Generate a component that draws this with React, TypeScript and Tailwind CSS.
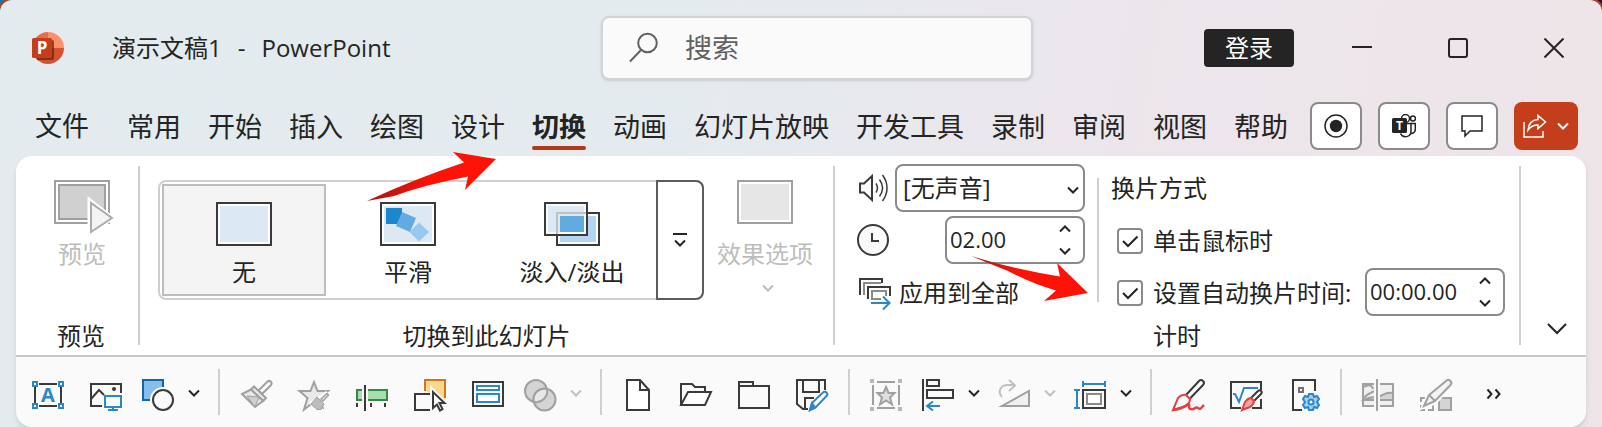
import type { ReactNode } from "react";
import clsx from "clsx";

const DARK = "#3b3a39";
const BLUE = "#2b88c8";
const GRAY = "#a0a0a0";

const tabs = [
  "常用",
  "开始",
  "插入",
  "绘图",
  "设计",
  "切换",
  "动画",
  "幻灯片放映",
  "开发工具",
  "录制",
  "审阅",
  "视图",
  "帮助",
];

function Icon({ children }: { children: ReactNode }) {
  return (
    <svg
      className="h-8 w-8 shrink-0 overflow-visible"
      viewBox="0 0 32 32"
      fill="none"
      stroke={DARK}
      strokeWidth={2}
    >
      {children}
    </svg>
  );
}

function Chevron({ className, up }: { className?: string; up?: boolean }) {
  return (
    <svg
      className={clsx("h-2 w-3 shrink-0", className)}
      viewBox="0 0 12 8"
      fill="none"
      stroke="currentColor"
      strokeWidth={2}
    >
      <path d={up ? "M1 6.5 6 1.5l5 5" : "M1 1.5l5 5 5-5"} />
    </svg>
  );
}

function Tool({ label, children }: { label: string; children: ReactNode }) {
  return (
    <button aria-label={label} className="px-2.5 pt-1.5">
      <Icon>{children}</Icon>
    </button>
  );
}

function SplitTool({
  label,
  disabled,
  children,
}: {
  label: string;
  disabled?: boolean;
  children: ReactNode;
}) {
  return (
    <button
      aria-label={label}
      disabled={disabled}
      className="flex items-center gap-3.5 pt-1.5 pr-2 pl-1"
    >
      <Icon>{children}</Icon>
      <Chevron className={disabled ? "mb-1 text-[#c0c0c0]" : "mb-1"} />
    </button>
  );
}

function ToolDivider() {
  return <div className="mx-1 h-[46px] w-0.5 bg-[#cfcfcf]" />;
}

function Logo() {
  return (
    <svg className="h-8 w-8" viewBox="0 0 32 32">
      <path d="M16 0A16 16 0 0 0 0 16h16z" fill="#ed6c47" />
      <path d="M16 0a16 16 0 0 1 16 16H16z" fill="#ff8f6b" />
      <path d="M0 16a16 16 0 0 0 32 0z" fill="#d35230" />
      <path d="M3 8h17a2 2 0 0 1 2 2v16a2 2 0 0 1-2 2H5z" fill="#6b2412" opacity=".75" />
      <rect y="6" width="20" height="20" rx="1.5" fill="#c43e1c" />
      <text
        x="10"
        y="22"
        textAnchor="middle"
        fontSize="17"
        fontWeight="700"
        fontFamily="Open Sans"
        fill="#fff"
      >
        P
      </text>
    </svg>
  );
}

function TitleBar() {
  return (
    <header className="flex h-24 items-center pl-8">
      <div className="flex flex-1 items-center">
        <Logo />
        <h1 className="ml-12 flex gap-4 text-2xl whitespace-nowrap">
          <span>演示文稿1</span>
          <span>-</span>
          <span>PowerPoint</span>
        </h1>
      </div>

      <label className="flex h-16 w-[432px] items-center rounded-lg border-2 border-[#d4d4d4] bg-[#fafafa] pl-[26px] shadow-sm">
        <svg
          className="h-8 w-8 shrink-0"
          viewBox="0 0 32 32"
          fill="none"
          stroke="#616161"
          strokeWidth={2}
        >
          <circle cx="18.5" cy="11" r="9.3" />
          <path d="M12 18 1 29.5" />
        </svg>
        <input
          type="text"
          aria-label="搜索"
          placeholder="搜索"
          className="ml-6 w-full min-w-0 bg-transparent text-[27px] outline-none placeholder:text-[#616161]"
        />
      </label>

      <div className="flex h-full flex-1 items-center justify-end">
        <button className="mr-5 flex h-[38px] w-[90px] items-center justify-center rounded-sm bg-[#242424] text-2xl text-white">
          登录
        </button>
        <button aria-label="最小化" className="flex h-full w-24 items-center justify-center">
          <svg className="h-5 w-5" viewBox="0 0 20 20" stroke="#242424" strokeWidth={2}>
            <path d="M0 9h20" />
          </svg>
        </button>
        <button aria-label="最大化" className="flex h-full w-24 items-center justify-center">
          <svg className="h-5 w-5" viewBox="0 0 20 20" fill="none" stroke="#242424" strokeWidth={2}>
            <rect x="1" y="1" width="18" height="18" rx="2" />
          </svg>
        </button>
        <button aria-label="关闭" className="flex h-full w-24 items-center justify-center">
          <svg className="h-5 w-5" viewBox="0 0 20 20" stroke="#242424" strokeWidth={2}>
            <path d="M0.5 0.5l19 19M19.5 0.5l-19 19" />
          </svg>
        </button>
      </div>
    </header>
  );
}

function TabBar() {
  return (
    <nav className="flex h-[60px] items-center py-1.5 pr-6 pl-[35px]">
      <a href="#file" className="mr-[38px] text-[27px] leading-[50px]">
        文件
      </a>
      <ul className="flex flex-1 gap-[27px]">
        {tabs.map((tab) => (
          <li key={tab}>
            <a
              href={`#${tab}`}
              className={clsx(
                "flex h-12 flex-col text-[27px] leading-[50px] whitespace-nowrap",
                tab === "切换" && "font-bold"
              )}
            >
              <span className="h-11">{tab}</span>
              {tab === "切换" ? (
                <span className="h-1 rounded-full bg-[#b23a1b]" />
              ) : null}
            </a>
          </li>
        ))}
      </ul>
      <div className="flex gap-4">
        <button
          aria-label="录制"
          className="flex h-12 w-[52px] items-center justify-center rounded-lg border-2 border-[#8a8a8a] bg-white"
        >
          <svg className="h-6 w-6" viewBox="0 0 24 24" fill="none" stroke="#242424">
            <circle cx="12" cy="12" r="11" strokeWidth={1.5} />
            <circle cx="12" cy="12" r="6.2" fill="#242424" stroke="none" />
          </svg>
        </button>
        <button
          aria-label="在 Teams 中演示"
          className="flex h-12 w-[52px] items-center justify-center rounded-lg border-2 border-[#8a8a8a] bg-white"
        >
          <svg className="h-6 w-6" viewBox="0 0 24 24" fill="none" stroke="#242424" strokeWidth={1.5}>
            <circle cx="13.5" cy="4.5" r="4" />
            <circle cx="21" cy="4.5" r="2.5" />
            <path d="M15 9.5h4v8a5.500 5.500 0 0 1-10.500 2" />
            <path d="M19 9.500h4.300v6a4 4 0 0 1-4.500 4" />
            <rect y="4" width="15" height="15" rx="1.5" fill="#242424" stroke="none" />
            <text
              x="7.5"
              y="16"
              textAnchor="middle"
              fontSize="12"
              fontWeight="700"
              fontFamily="Open Sans"
              fill="#fff"
              stroke="none"
            >
              T
            </text>
          </svg>
        </button>
        <button
          aria-label="批注"
          className="flex h-12 w-[52px] items-center justify-center rounded-lg border-2 border-[#8a8a8a] bg-white"
        >
          <svg className="h-6 w-6" viewBox="0 0 24 24" fill="none" stroke="#242424" strokeWidth={1.5}>
            <path d="M2 2h20v15H10l-5 5v-5H2z" />
          </svg>
        </button>
        <button
          aria-label="共享"
          className="flex h-12 w-16 items-center justify-center gap-2.5 rounded-lg bg-[#c43e1c] text-white"
        >
          <svg className="h-6 w-6" viewBox="0 0 24 24" fill="none" stroke="currentColor" strokeWidth={1.5}>
            <path d="M1 8v15h19v-6" />
            <path d="M15 1.5 22.5 8 15 14.500v-3.500c-5 0-7.500 1.500-10 5 .5-6 3.500-10 10-10.500z" />
          </svg>
          <Chevron />
        </button>
      </div>
    </nav>
  );
}

function Group({
  label,
  className,
  children,
}: {
  label: string;
  className?: string;
  children: ReactNode;
}) {
  return (
    <section
      aria-label={label}
      className={clsx("flex flex-col justify-between pt-2", className)}
    >
      {children}
      <p className="pb-[5px] text-center text-2xl leading-7">{label}</p>
    </section>
  );
}

function RibbonDivider() {
  return <div className="my-2.5 w-0.5 bg-[#cfcfcf]" />;
}

function GalleryItem({
  label,
  selected,
  children,
}: {
  label: string;
  selected?: boolean;
  children: ReactNode;
}) {
  return (
    <button
      className={clsx(
        "flex w-[164px] flex-col items-center gap-2.5 border-2 pt-4",
        selected ? "border-[#bdbdbd] bg-[#f4f4f4]" : "border-transparent"
      )}
    >
      <svg className="h-11 w-14" viewBox="0 0 56 44" fill="none" stroke={DARK} strokeWidth={2}>
        {children}
      </svg>
      <span className="text-2xl leading-8">{label}</span>
    </button>
  );
}

function Spinner({ label, value }: { label: string; value: string }) {
  return (
    <div className="flex h-12 w-[140px] items-center rounded-lg border-2 border-[#8a8a8a] bg-white pr-3 pl-[3px]">
      <input
        type="text"
        aria-label={label}
        defaultValue={value}
        className="w-full min-w-0 bg-transparent text-[22px] outline-none"
      />
      <div className="flex flex-col gap-3.5">
        <button aria-label={`${label} +`} className="block">
          <Chevron up />
        </button>
        <button aria-label={`${label} -`} className="block">
          <Chevron />
        </button>
      </div>
    </div>
  );
}

function Check({ label }: { label: string }) {
  return (
    <label className="flex h-12 items-center pt-0.5 text-2xl whitespace-nowrap">
      <span className="mr-2.5 ml-1.5 grid">
        <input
          type="checkbox"
          defaultChecked
          className="peer col-start-1 row-start-1 h-[26px] w-[26px] appearance-none rounded-sm border-2 border-[#8a8a8a] bg-white"
        />
        <svg
          className="pointer-events-none invisible col-start-1 row-start-1 h-[26px] w-[26px] peer-checked:visible"
          viewBox="0 0 26 26"
          fill="none"
          stroke="#242424"
          strokeWidth={2}
        >
          <path d="M6 13l5 5 9.500-9.500" />
        </svg>
      </span>
      {label}
    </label>
  );
}

function Ribbon() {
  return (
    <div className="flex h-[199px] bg-white">
      <Group label="预览" className="w-[122px] pl-2">
        <button disabled className="mt-4 ml-0.5 flex flex-col items-center gap-3 text-[#bdbdbd]">
          <svg className="h-11 w-14 overflow-visible" viewBox="0 0 56 44" stroke="#a0a0a0" strokeWidth={2}>
            <rect x="1" y="1" width="54" height="42" fill="#fff" />
            <rect x="5" y="5" width="46" height="34" fill="#d0d0d0" />
            <path
              d="M35 19v37l24-18z"
              fill="#fff"
              stroke="#fff"
              strokeWidth={3}
            />
            <path d="M37 23v29l21-14z" fill="#f4f4f4" stroke="#ababab" />
          </svg>
          <span className="text-2xl leading-9">预览</span>
        </button>
      </Group>
      <RibbonDivider />

      <Group label="切换到此幻灯片" className="flex-1">
        <div className="mt-4 flex justify-between pr-5 pl-[18px]">
          <div className="flex h-[120px] rounded-lg border-2 border-[#cfcfcf]">
            <div className="flex p-0.5">
              <GalleryItem label="无" selected>
                <rect x="1" y="1" width="54" height="42" fill="#fff" />
                <path d="M4 4h48v36H4z" fill="#dce9f5" stroke="none" />
              </GalleryItem>
              <GalleryItem label="平滑">
                <rect x="1" y="1" width="54" height="42" fill="#fff" />
                <g stroke="none">
                  <path d="M4 4h48v36H4z" fill="#dce9f5" />
                  <path d="M6 6h16v16H6z" fill="#1c87cd" />
                  <path d="M22 10l14 6-6 14-14-6z" fill="#62abe0" />
                  <path d="M39 20.500l10 9.500-10 9.500-9.500-9.500z" fill="#99c8ee" />
                </g>
              </GalleryItem>
              <GalleryItem label="淡入/淡出">
                <rect x="13" y="11" width="42" height="32" fill="#fff" />
                <path d="M16 14h36v26H16z" fill="#b3d5f2" stroke="none" />
                <rect x="1" y="1" width="42" height="32" fill="#f7fafd" />
                <path d="M4 4h36v26H4z" fill="#dce9f5" stroke="none" />
                <path d="M13 32V11h29" stroke="#c0c0c0" />
                <path d="M16 14h24v16H16z" fill="#62abe0" stroke="none" />
              </GalleryItem>
            </div>
            <button
              aria-label="其他切换效果"
              className="-my-0.5 -mr-0.5 flex w-12 flex-col items-center justify-center gap-1 rounded-r-lg border-2 border-[#5c5c5c]"
            >
              <span className="h-0.5 w-3.5 bg-[#242424]" />
              <Chevron />
            </button>
          </div>
          <button disabled className="flex flex-col items-center gap-3 text-2xl text-[#bdbdbd]">
            <svg className="h-11 w-14" viewBox="0 0 56 44" stroke="#a0a0a0" strokeWidth={2}>
              <rect x="1" y="1" width="54" height="42" fill="#fff" />
              <path d="M4 4h48v36H4z" fill="#e6e6e6" stroke="none" />
            </svg>
            <span className="leading-9">效果选项</span>
            <Chevron className="ml-1.5" />
          </button>
        </div>
      </Group>
      <RibbonDivider />

      <Group label="计时" className="w-[684px]">
        <div className="flex pl-[22px] text-2xl">
          <div className="flex w-[228px] flex-col gap-1">
            <div className="flex h-12 items-center justify-between">
              <Icon>
                <path d="M3 11.500h4L15 4v24l-8-7.500H3z" fill="#fafafa" />
                <g strokeWidth={1.5}>
                  <path d="M19 11.500c2 3 2 6 0 9" />
                  <path d="M22.500 7.500c4 5.500 4 11.500 0 17" />
                  <path d="M25.500 3c6 8 6 18 0 26" />
                </g>
              </Icon>
              <div className="grid w-[190px]">
                <select
                  aria-label="声音"
                  className="col-start-1 row-start-1 h-12 w-full appearance-none rounded-lg border-2 border-[#8a8a8a] bg-white pl-1.5"
                >
                  <option>[无声音]</option>
                </select>
                <Chevron className="pointer-events-none col-start-1 row-start-1 mt-1 mr-1.5 self-center justify-self-end" />
              </div>
            </div>
            <div className="flex h-12 items-center justify-between">
              <Icon>
                <circle cx="16" cy="16" r="15" fill="#fafafa" />
                <path d="M15 9v8h7" />
              </Icon>
              <Spinner label="持续时间" value="02.00" />
            </div>
            <button className="flex h-12 items-center gap-2.5 pt-0.5">
              <Icon>
                <path d="M3 18V2h22v4" />
                <path d="M7 18V6h17" stroke="#8a8a8a" />
                <path d="M11 22V10h22v9" />
                <path d="M15 23v-9h14v5M15 22h9" stroke="#8a8a8a" />
                <path d="M14 26h18M26 19.500l6.500 6.500-6.500 6.500" stroke={BLUE} />
              </Icon>
              应用到全部
            </button>
          </div>
          <div className="mx-3 mt-3.5 h-[124px] w-0.5 bg-[#cfcfcf]" />
          <div className="flex flex-1 flex-col gap-1">
            <p className="h-12 leading-[48px]">换片方式</p>
            <Check label="单击鼠标时" />
            <div className="flex items-center justify-between pr-3.5">
              <Check label="设置自动换片时间:" />
              <Spinner label="自动换片时间" value="00:00.00" />
            </div>
          </div>
        </div>
      </Group>
      <RibbonDivider />

      <div className="flex w-[65px] items-end pb-5 pl-[26px]">
        <button aria-label="折叠功能区">
          <svg className="h-3 w-5" viewBox="0 0 20 12" fill="none" stroke="#242424" strokeWidth={2}>
            <path d="M1 1l9 9 9-9" />
          </svg>
        </button>
      </div>
    </div>
  );
}

function QuickAccess() {
  return (
    <div className="flex h-[72px] items-center gap-1.5 border-t-2 border-[#c8c8c8] bg-[#fafafa] pl-1.5 text-[#242424]">
      <Tool label="文本框">
        <path d="M7 5h18M7 27h18M3 8v16M29 8v16" />
        <g stroke={BLUE} fill="#fff">
          <path d="M1 3h4v4H1zM27 3h4v4h-4zM1 25h4v4H1zM27 25h4v4h-4z" />
        </g>
        <text
          x="16"
          y="23"
          textAnchor="middle"
          fontSize="20"
          fontWeight="700"
          fontFamily="Open Sans"
          fill={BLUE}
          stroke="none"
        >
          A
        </text>
      </Tool>
      <Tool label="插入图片">
        <path d="M12 27H1V5h30v9" />
        <path d="M1 20l8-9 5 5" />
        <circle cx="24" cy="10" r="2" fill={DARK} stroke="none" />
        <path d="M15 17h16v11H15zM23 28v4M18 31h10" stroke={BLUE} />
      </Tool>
      <SplitTool label="形状">
        <path d="M1 1h20v20H1z" fill="#83beec" stroke="#1565a8" />
        <circle cx="21" cy="21" r="13" fill="#fafafa" stroke="none" />
        <circle cx="21" cy="21" r="10" />
      </SplitTool>
      <ToolDivider />

      <Tool label="格式刷">
        <g stroke={GRAY} fill="#e8e8e8">
          <path d="M18.500 11.500 27.500 2.500a2.500 2.500 0 0 1 3.500 3.500L22 15z" fill="#fafafa" />
          <path d="M14 7.500 26 19l-3 3L11 10.500z" />
          <path d="M11 10.500 2 15l13 13 8-6z" />
          <path d="M7 17l12 1-4 10z" fill="#d0d0d0" strokeWidth={1} />
        </g>
      </Tool>
      <Tool label="动画刷">
        <g stroke={GRAY} fill="#e8e8e8">
          <path d="M16 3l3.500 9H30l-8.500 7 3 9.500L16 23l-10 7.500L9.500 19 1.500 12h11z" />
          <path
            d="M11 23l7-4 10-7 4 4-7 6-4 10h-5z"
            fill="#fafafa"
            stroke="none"
          />
          <path d="M23 20l6-5.500 1.500 1.500-5.500 6z" strokeWidth={1.5} />
          <path d="M19 18l7 7-3 5.500h-4L13 25z" fill="#bdbdbd" strokeWidth={1} />
        </g>
      </Tool>
      <Tool label="动画窗格">
        <path d="M1 11h30v10H1z" fill="#a5dfab" stroke="#38884a" />
        <path d="M9 7v24" stroke="#fafafa" strokeWidth={6} />
        <path d="M9 6v26M1 24v4M15 24v4M29 24v4" />
      </Tool>
      <Tool label="选择窗格">
        <path d="M11 12V1h20v20" fill="#f9d88d" stroke="none" />
        <path d="M11 12V1h20v18" stroke="#d3761b" />
        <path d="M16 6v26h16V22z" fill="#fafafa" stroke="none" />
        <path d="M16 15H1v16h15" />
        <path d="M19 13v16l4-3.500 3 6 2.500-1.500-3-6h5z" fill="#fff" />
      </Tool>
      <Tool label="幻灯片版式">
        <path d="M1 3h30v24H1z" />
        <path d="M5 7h22v4H5zM5 15h22v8H5z" stroke={BLUE} fill="#fff" />
      </Tool>
      <SplitTool label="合并形状" disabled>
        <g stroke={GRAY}>
          <circle cx="12" cy="12" r="11" fill="#d4d4d4" />
          <circle cx="20.5" cy="20.5" r="11" fill="#d4d4d4" />
          <path
            d="M9.500 20.500a11 11 0 0 1 13.500-10.500A11 11 0 0 1 9.700 22.800z"
            fill="#e8e8e8"
          />
        </g>
      </SplitTool>
      <ToolDivider />

      <Tool label="新建">
        <path d="M5 1h13l9 10v20H5z" fill="#fff" />
        <path d="M18 1v10h9" />
      </Tool>
      <Tool label="打开">
        <path d="M1 26V5h11l3 3h10v5" />
        <path d="M1 26 8 13h23l-6 13z" fill="#fff" />
      </Tool>
      <Tool label="关闭">
        <path d="M1 3h14v4h16v22H1z" />
        <path d="M1 7h14" />
      </Tool>
      <Tool label="另存为">
        <path d="M29 11V1H1v24l6 5h5M7 1v12h16V1" />
        <path d="M9 30V19h9" />
        <path
          d="M14 31l2-7L27 13.500a2.300 2.300 0 0 1 3.500 3.500L19.500 28.500z"
          stroke={BLUE}
          fill="#fff"
        />
        <path d="M16 24l3 4.500-5 2.500z" fill={BLUE} stroke={BLUE} />
      </Tool>
      <ToolDivider />

      <Tool label="选择动画对象">
        <g stroke={GRAY}>
          <path d="M7 3h18M7 29h18M3 6v20M29 6v20" />
          <path d="M0 2h4M28 2h4M0 30h4M28 30h4" strokeWidth={4} stroke="#b8b8b8" />
          <path
            d="M16 8l2.500 6h6l-4.500 4.500 2 7L16 21.500l-6 4 2-7L7.500 14h6z"
            fill="#e0e0e0"
          />
        </g>
      </Tool>
      <SplitTool label="对齐">
        <path d="M1 0v32" />
        <path d="M5 1h12v6H5zM5 11h26v8H5z" />
        <path d="M5 27h13M11 22.500 5 27l6 4.500" stroke={BLUE} />
      </SplitTool>
      <SplitTool label="旋转" disabled>
        <g stroke={GRAY}>
          <path d="M31 12v15H4z" fill="#f0f0f0" />
          <path d="M4 18C-1 12 3 6 10 6h7M11 1l6 5.500-6 5.500" stroke="#c0c0c0" />
        </g>
      </SplitTool>
      <SplitTool label="大小">
        <path d="M9 11h22v18H9z" />
        <path d="M13 15h14v10H13z" stroke="#8a8a8a" fill="#fff" />
        <path d="M8 5h24M9 2v6M31 2v6M3 10v20M0 11h6M0 29h6" stroke={BLUE} />
      </SplitTool>
      <ToolDivider />

      <Tool label="墨迹">
        <path d="M14 16 27 2a2.500 2.500 0 0 1 4 4L17.500 20" fill="#fff" />
        <path
          d="M1 31l5-12q4-4 8-3l4 4q0 4-4 7z"
          stroke="#e04340"
          fill="#fff"
        />
        <path d="M1 31c8-1 12-3 15-6 3 0-1 5 3 5 4 1 4-3 7-1s3 0 6-3" stroke="#e04340" strokeWidth={2.5} />
      </Tool>
      <Tool label="墨迹公式">
        <path d="M31 11V3H1v26h10M22 29h9v-9" />
        <path d="M3 15h2l4 8 5-14h14" stroke={BLUE} />
        <path d="M21 19l7-7a2 2 0 0 1 3 3l-7 7" fill="#fff" />
        <path d="M12 31l3-8q3-4 6-4l3 3q0 3-4 6z" stroke="#e04340" fill="#f2a5a3" />
      </Tool>
      <Tool label="页面设置">
        <path d="M27 12V1H5v30h9" />
        <path d="M11 9h4v4h-4z" stroke="#707070" />
        <path
          d="M21 15h4l1 3 3-1 2 3-2 3 2 3-2 3-3-1-1 3h-4l-1-3-3 1-2-3 2-3-2-3 2-3 3 1z"
          stroke={BLUE}
          fill="#a7d0ef"
        />
        <circle cx="23" cy="23" r="2.5" fill="#fff" stroke={BLUE} />
      </Tool>
      <ToolDivider />

      <Tool label="比较">
        <g stroke={GRAY}>
          <path d="M1 5h30v22H1z" fill="#f0f0f0" />
          <path d="M2 19c5-6 8-5 12-8M2 8c4-3 8-2 9 2" />
          <path d="M2 21c5-3 9-3 13-3 6-1 8-6 16-4v7z" fill="#d4d4d4" />
          <path d="M15 0v32" stroke="#fafafa" strokeWidth={6} />
          <path d="M15 0v32" />
        </g>
      </Tool>
      <Tool label="墨迹转换为形状">
        <g stroke={GRAY}>
          <path d="M1 23v-4h4M1 26v5h4M8 31h5v-5" />
          <path d="M19 19h12v12H19z" fill="#d4d4d4" />
          <path
            d="M4 27l5-11L26 1.500a3 3 0 0 1 4.500 4L15 23z"
            stroke="#fafafa"
            strokeWidth={5}
          />
          <path d="M4 27l5-11L26 2a2.800 2.800 0 0 1 4.500 4L15 22z" fill="#f4f4f4" />
          <path d="M9 16l6 6" />
        </g>
      </Tool>
      <button aria-label="其他命令" className="px-[18px] pt-1">
        <svg className="h-3 w-4" viewBox="0 0 16 12" fill="none" stroke="currentColor" strokeWidth={2}>
          <path d="M1.500 1.500l4 4.500-4 4.500M9.500 1.500l4 4.500-4 4.500" />
        </svg>
      </button>
    </div>
  );
}

// red pointers drawn over the ribbon
function Pointers() {
  return (
    <>
      <svg
        className="pointer-events-none absolute top-[150px] left-[364px] h-14 w-[136px]"
        viewBox="0 0 136 56"
        aria-hidden="true"
      >
        <defs>
          <linearGradient id="tail-a">
            <stop offset="0" stopColor="#a81410" />
            <stop offset=".5" stopColor="#ff1206" />
          </linearGradient>
        </defs>
        <path
          d="M3 51Q50 29 100 12.500L89 2l43 7-31 31 3-13.500Q60 35 30 46z"
          fill="url(#tail-a)"
        />
      </svg>
      <svg
        className="pointer-events-none absolute top-[252px] left-[968px] h-[52px] w-[124px]"
        viewBox="0 0 124 52"
        aria-hidden="true"
      >
        <defs>
          <linearGradient id="tail-b">
            <stop offset="0" stopColor="#a81410" />
            <stop offset=".4" stopColor="#ff1206" />
          </linearGradient>
        </defs>
        <path
          d="M3 4Q45 17 92 24.500L89 11l31 30-44 8 12-10.500Q65 32 40 19z"
          fill="url(#tail-b)"
        />
      </svg>
    </>
  );
}

export default function App() {
  return (
    <div className="overflow-hidden bg-linear-to-r from-[#1578a8] to-[#2b1030]">
      <div className="relative rounded-t-xl bg-linear-100 from-[#e3ebee] from-40% via-[#ece6ec] via-68% to-[#eee4e8] font-['Open_Sans','Noto_Sans_CJK_SC',sans-serif] text-[#242424] shadow-[0_0_0_2px_#b5401f]">
        <TitleBar />
        <TabBar />
        <main className="mx-4 overflow-hidden rounded-2xl shadow-md">
          <Ribbon />
          <QuickAccess />
        </main>
        <Pointers />
      </div>
    </div>
  );
}
